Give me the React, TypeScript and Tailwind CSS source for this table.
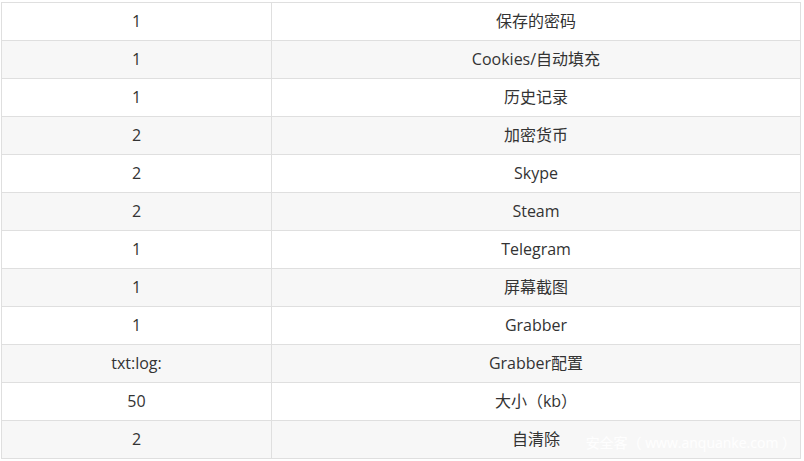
const rows: [string, string][] = [
  ['1', '保存的密码'],
  ['1', 'Cookies/自动填充'],
  ['1', '历史记录'],
  ['2', '加密货币'],
  ['2', 'Skype'],
  ['2', 'Steam'],
  ['1', 'Telegram'],
  ['1', '屏幕截图'],
  ['1', 'Grabber'],
  ['txt:log:', 'Grabber配置'],
  ['50', '大小（kb）'],
  ['2', '自清除']
];

const App = () => {
  return (
    <div className="bg-white pl-[1px] pt-[2px] w-[804px] h-[461px]">
      <div
        className="relative w-[800px] border-t border-l border-r border-[#dfdfdf] text-[16px] text-[#333]"
        style={{ fontFamily: '"Open Sans", "Noto Sans CJK SC", sans-serif' }}
      >
        {rows.map(([count, name], i) => (
          <div
            key={i}
            className={`flex h-[38px] border-b border-[#dfdfdf] pb-[2px] ${i % 2 === 1 ? 'bg-[#f7f7f7]' : 'bg-white'}`}
          >
            <div className="-mb-[2px] flex w-[270px] items-center justify-center border-r border-[#dfdfdf] pb-[2px]">
              {count}
            </div>
            <div className="flex flex-1 items-center justify-center">{name}</div>
          </div>
        ))}
        <div className="absolute bottom-[6px] right-[4px] text-[14px] text-white/90 pointer-events-none">
          安全客（ www.anquanke.com ）
        </div>
      </div>
    </div>
  );
};

export default App;
